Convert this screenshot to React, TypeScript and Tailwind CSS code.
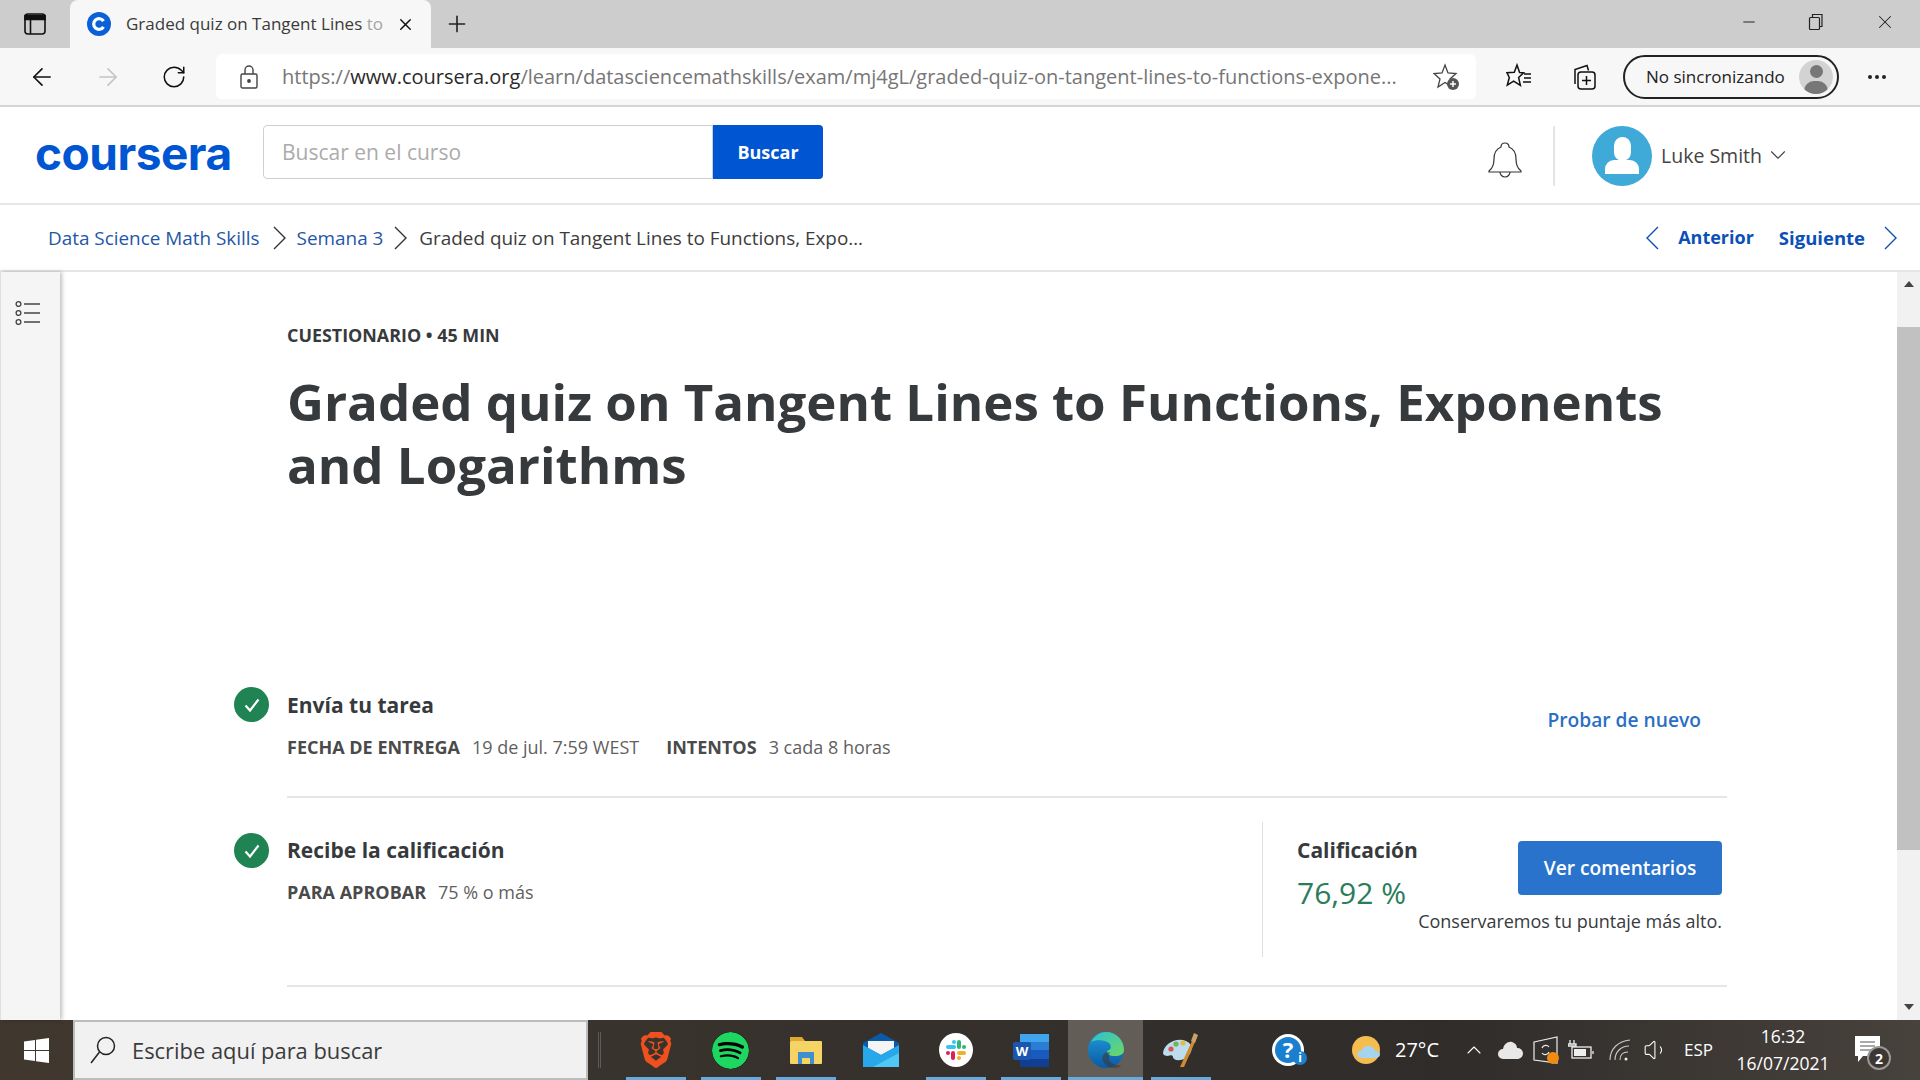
import { ArrowLeft, ArrowRight, ChevronDown, ChevronUp, Minus, Plus, RotateCw, Volume1, X } from 'lucide-react'
import { SiBrave, SiSpotify } from 'react-icons/si'

const OPEN = "font-['Open_Sans',sans-serif]"

function TabFavicon() {
  return (
    <svg width="24" height="24" viewBox="0 0 24 24">
      <circle cx="12" cy="12" r="12" fill="#0b5fd8" />
      <path d="M16.5 9.2a5.3 5.3 0 1 0 0 5.6" fill="none" stroke="#fff" strokeWidth="3.2" />
    </svg>
  )
}

function TabStrip() {
  return (
    <div className="flex h-[48px] bg-[#cdcdcd]">
      <div className="flex w-[70px] items-center justify-center">
        <svg width="22" height="22" viewBox="0 0 22 22" fill="none" stroke="#111" strokeWidth="1.6">
          <rect x="1" y="1" width="20" height="20" rx="3" />
          <path d="M1 2.5h20v4H1z" fill="#111" />
          <path d="M6.5 6v15" />
        </svg>
      </div>
      <div className="flex w-[361px] items-center rounded-t-lg bg-[#f7f7f7] pl-[17px]">
        <TabFavicon />
        <span className="ml-[15px] w-[258px] whitespace-nowrap text-[17px] text-[#3b3b3b]">
          Graded quiz on Tangent Lines <span className="text-[#a5a5a5]">to</span>
        </span>
        <X size={19} strokeWidth={1.8} className="ml-[12px] text-[#111]" />
      </div>
      <div className="flex w-[51px] items-center justify-center">
        <Plus size={26} strokeWidth={1.5} className="text-[#222]" />
      </div>
      <div className="flex-1" />
      <div className="flex items-center gap-[49px] pr-[24px] pb-[4px]">
        <Minus size={18} strokeWidth={1.3} className="text-[#222]" />
        <svg width="18" height="18" viewBox="0 0 18 18" fill="none" stroke="#222" strokeWidth="1.2">
          <rect x="2.5" y="4.5" width="10" height="12" rx="1" />
          <path d="M5.5 4.5V1.5h9.5v12h-2.5" />
        </svg>
        <X size={22} strokeWidth={1.1} className="text-[#222]" />
      </div>
    </div>
  )
}

function BrowserToolbar() {
  return (
    <div className="flex h-[59px] items-center border-b-2 border-[#d4d4d4] bg-[#f7f7f7]">
      <div className="flex w-[216px] items-center">
        <ArrowLeft size={28} strokeWidth={1.4} className="ml-[28px] text-[#111]" />
        <ArrowRight size={28} strokeWidth={1.4} className="ml-[38px] text-[#c4c4c4]" />
        <RotateCw size={26} strokeWidth={1.4} className="ml-[39px] text-[#111]" />
      </div>
      <div className="flex h-[45px] w-[1260px] items-center rounded-md bg-white pl-[24px]">
        <svg width="18" height="24" viewBox="0 0 18 24" fill="none" stroke="#444" strokeWidth="1.4">
          <rect x="1" y="9" width="16" height="14" rx="1.5" />
          <path d="M5 9V5a4 4 0 0 1 8 0v4" />
          <circle cx="9" cy="16" r="1.2" fill="#444" />
        </svg>
        <div className="ml-[24px] w-[1116px] overflow-hidden whitespace-nowrap text-[20px] text-[#767676]">
          <span>https://</span>
          <span className="text-[#2a2a2a]">www.coursera.org</span>
          <span>/learn/datasciencemathskills/exam/mj4gL/graded-quiz-on-tangent-lines-to-functions-expone...</span>
        </div>
        <svg className="ml-[35px]" width="28" height="28" viewBox="0 0 28 28" fill="none" stroke="#444" strokeWidth="1.3">
          <path d="M12 2l3 8 8 .5-6 5.500 2 8-7-4.500-7 4.500 2-8-6-5.500 8-.5z" />
          <circle cx="20" cy="21" r="6" fill="#555" stroke="none" />
          <path d="M20 18v6M17 21h6" stroke="#fff" strokeWidth="1.5" />
        </svg>
      </div>
      <div className="ml-[23px] flex w-[40px] justify-center">
        <svg width="26" height="28" viewBox="0 0 26 28" fill="none" stroke="#111" strokeWidth="1.5">
          <path d="M11 2l2.600 7.500 4 .3-5 4.700 1.800 8-6.800-4.300-6.300 4 2-7.700-2.300-4.700 7.300-.5z" />
          <path d="M18 11h7M18 15h7M17 19h8" />
        </svg>
      </div>
      <div className="ml-[25px] flex w-[40px] justify-center">
        <svg width="28" height="28" viewBox="0 0 28 28" fill="none" stroke="#111" strokeWidth="1.5">
          <path d="M5 21V6.500l12-4 1.500 5" />
          <rect x="8" y="9" width="17" height="17" rx="3" />
          <path d="M16.500 13v9M12 17.500h9" />
        </svg>
      </div>
      <div className="ml-[19px] flex h-[44px] w-[216px] items-center justify-between rounded-full border-2 border-[#222] pl-[21px] pr-[4px]">
        <span className="text-[17px] text-[#222]">No sincronizando</span>
        <span className="relative flex h-[34px] w-[34px] items-center justify-center overflow-hidden rounded-full bg-[#d3d3d3]">
          <span className="absolute top-[5px] h-[13px] w-[13px] rounded-full bg-[#777]" />
          <span className="absolute top-[21px] h-[20px] w-[24px] rounded-full bg-[#777]" />
        </span>
      </div>
      <div className="ml-[29px] flex gap-[3px]">
        <span className="h-[4px] w-[4px] rounded-full bg-[#222]" />
        <span className="h-[4px] w-[4px] rounded-full bg-[#222]" />
        <span className="h-[4px] w-[4px] rounded-full bg-[#222]" />
      </div>
    </div>
  )
}

function SiteHeader() {
  return (
    <div className="flex h-[98px] items-center border-b-2 border-[#e6e6e6] bg-white pl-[35px]">
      <span className="w-[228px] -translate-y-[2px] font-['Inter',sans-serif] text-[46px] leading-none font-bold tracking-[-0.5px] text-[#0056d2]">
        coursera
      </span>
      <div className="flex h-[54px] w-[560px] -translate-y-[3px]">
        <div className="flex w-[450px] items-center rounded-l border border-[#cfcfcf] pl-[18px] pt-[2px] text-[21px] text-[#ababab]">
          Buscar en el curso
        </div>
        <div className="flex w-[110px] items-center justify-center rounded-r bg-[#0056d2] text-[18px] font-bold text-white">
          Buscar
        </div>
      </div>
      <div className="flex-1" />
      <svg className="mr-[31px] mt-[10px]" width="34" height="37" viewBox="0 0 34 37" fill="none" stroke="#333" strokeWidth="1.2">
        <path d="M17 1c-3 0-4 2-4 4-5 2-7 6-7 12 0 6-1 9-5 12v1h32v-1c-4-3-5-6-5-12 0-6-2-10-7-12 0-2-1-4-4-4z" />
        <path d="M12 30a5 5 0 0 0 10 0" />
      </svg>
      <div className="mt-[2px] h-[60px] w-[2px] bg-[#e4e4e4]" />
      <div className="ml-[37px] mt-[2px] flex h-[60px] w-[60px] items-end justify-center overflow-hidden rounded-full bg-[#3fa9d8]">
        <div className="flex flex-col items-center">
          <span className="h-[24px] w-[17px] rounded-full bg-white" />
          <span className="mb-[12px] -mt-[1px] h-[14px] w-[34px] rounded-t-[9px] bg-white" />
        </div>
      </div>
      <span className="ml-[9px] pt-[1px] text-[19.5px] text-[#444]">Luke Smith</span>
      <ChevronDown size={26} strokeWidth={1} className="ml-[3px] mr-[129px] text-[#444]" />
    </div>
  )
}

function Chevron({ left, className }: { left?: boolean; className: string }) {
  return (
    <svg className={className} width="14" height="24" viewBox="0 0 14 24" fill="none" stroke="currentColor" strokeWidth="1.4">
      <path d={left ? 'M13 1L2 12l11 11' : 'M1 1l11 11L1 23'} />
    </svg>
  )
}

function Breadcrumbs() {
  return (
    <div className="flex h-[67px] items-center border-b-2 border-[#e6e6e6] bg-white pl-[48px] text-[18.9px]">
      <span className="pt-[1px] text-[#1f57a8]">Data Science Math Skills</span>
      <Chevron className="ml-[13px] mr-[10px] text-[#333]" />
      <span className="pt-[1px] text-[#1f57a8]">Semana 3</span>
      <Chevron className="mx-[11px] text-[#333]" />
      <span className="pt-[1px] text-[#3c3c3c]">Graded quiz on Tangent Lines to Functions, Expo…</span>
      <div className="flex-1" />
      <Chevron left className="text-[#0b50b8]" />
      <span className="ml-[19px] text-[18px] font-bold text-[#0b50b8]">Anterior</span>
      <span className="ml-[25px] text-[18.5px] font-bold text-[#0b50b8]">Siguiente</span>
      <Chevron className="ml-[19px] mr-[22px] text-[#0b50b8]" />
    </div>
  )
}

function CheckBadge() {
  return (
    <span className="flex h-[35px] w-[35px] shrink-0 items-center justify-center rounded-full bg-[#1f8354]">
      <svg width="20" height="20" viewBox="0 0 20 20" fill="none" stroke="#fff" strokeWidth="2.2">
        <path d="M3.500 10.500l4.500 5 8.500-11" />
      </svg>
    </span>
  )
}

function Sidebar() {
  return (
    <div className="z-10 w-[60px] shrink-0 border-l border-[#dfdfdf] bg-[#f5f5f5] pl-[14px] pt-[28px] shadow-[2px_0_4px_rgba(0,0,0,0.25)]">
      <svg width="26" height="26" viewBox="0 0 26 26" fill="none" stroke="#444" strokeWidth="1.3">
        <circle cx="3.500" cy="4" r="2.400" />
        <circle cx="3.500" cy="13" r="2.400" />
        <circle cx="3.500" cy="22" r="2.400" />
        <path d="M9 4h16M9 13h16M9 22h16" />
      </svg>
    </div>
  )
}

function QuizContent() {
  return (
    <div className="min-w-0 flex-1 overflow-hidden bg-white pl-[174px] pr-[170px] text-[#373a3c]">
      <div className="ml-[53px] pt-[51px]">
        <p className="text-[17.9px] leading-[24px] font-bold">CUESTIONARIO • 45 MIN</p>
        <h1 className="mt-[23px] text-[51px] leading-[63px] font-bold">
          Graded quiz on Tangent Lines to Functions, Exponents and Logarithms
        </h1>
      </div>
      <div className="mt-[191px] flex h-[109px]">
        <CheckBadge />
        <div className="ml-[18px] flex-1">
          <p className="text-[21px] leading-[36px] font-bold">Envía tu tarea</p>
          <p className="mt-[12px] flex text-[18px] leading-[24px]">
            <b className="text-[#4a4a4a]">FECHA DE ENTREGA</b>
            <span className="ml-[12px] text-[#5f5f5f]">19 de jul. 7:59 WEST</span>
            <b className="ml-[27px] text-[#4a4a4a]">INTENTOS</b>
            <span className="ml-[12px] text-[#5f5f5f]">3 cada 8 horas</span>
          </p>
        </div>
        <span className="mt-[19px] mr-[26px] text-[19.2px] leading-[28px] font-semibold text-[#2a6fc4]">Probar de nuevo</span>
      </div>
      <div className="ml-[53px] h-[2px] bg-[#e6e6e6]" />
      <div className="flex h-[187px] pt-[24px]">
        <div className="pt-[11px]">
          <CheckBadge />
        </div>
        <div className="ml-[18px] w-[975px] pt-[11px]">
          <p className="text-[21px] leading-[35px] font-bold">Recibe la calificación</p>
          <p className="mt-[12px] text-[18px] leading-[24px]">
            <b className="text-[#4a4a4a]">PARA APROBAR</b>
            <span className="ml-[12px] text-[#5f5f5f]">75 % o más</span>
          </p>
        </div>
        <div className="h-[135px] w-[1px] bg-[#e0e0e0]" />
        <div className="flex flex-1 pl-[34px] pt-[11px]">
          <div className="w-[221px]">
            <p className="text-[21px] leading-[35px] font-bold">Calificación</p>
            <p className="mt-[6px] text-[30px] leading-[38px] text-[#2a7d5a]">76,92 %</p>
          </div>
          <div className="flex w-[204px] flex-col items-end">
            <div className="mt-[8px] flex h-[54px] w-[204px] shrink-0 items-center justify-center rounded-sm bg-[#2a73cc] text-[19.2px] font-semibold text-white">
              Ver comentarios
            </div>
            <p className="mt-[13px] whitespace-nowrap text-[18px] leading-[26px]">Conservaremos tu puntaje más alto.</p>
          </div>
        </div>
      </div>
      <div className="ml-[53px] h-[2px] bg-[#e6e6e6]" />
    </div>
  )
}

function Scrollbar() {
  return (
    <div className="flex w-[23px] shrink-0 flex-col bg-[#f1f1f1]">
      <div className="flex h-[23px] items-center justify-center">
        <span className="h-0 w-0 border-x-[5px] border-b-[6px] border-x-transparent border-b-[#444]" />
      </div>
      <div className="mt-[32px] h-[523px] bg-[#c1c1c1]" />
      <div className="flex-1" />
      <div className="flex h-[26px] items-center justify-center">
        <span className="h-0 w-0 border-x-[5px] border-t-[6px] border-x-transparent border-t-[#444]" />
      </div>
    </div>
  )
}

function Tile({ active, running = true, children }: { active?: boolean; running?: boolean; children: React.ReactNode }) {
  return (
    <div className={active ? 'relative flex h-full w-[75px] items-center justify-center bg-[#635d57]' : 'relative flex h-full w-[75px] items-center justify-center'}>
      {children}
      {running && <span className={active ? 'absolute bottom-0 h-[3px] w-full bg-[#6aa9dc]' : 'absolute bottom-0 h-[3px] w-[60px] bg-[#6aa9dc]'} />}
    </div>
  )
}

function FilesIcon() {
  return (
    <svg width="32" height="28" viewBox="0 0 32 28">
      <path d="M0 1h12l3 4H0z" fill="#e0a82e" />
      <rect x="0" y="5" width="32" height="23" rx="1" fill="#f6d365" />
      <rect x="8" y="16" width="16" height="12" fill="#3f8fd0" />
      <rect x="12" y="22" width="8" height="6" fill="#f6d365" />
    </svg>
  )
}

function MailIcon() {
  return (
    <svg width="36" height="34" viewBox="0 0 36 34">
      <path d="M18 0L36 10v24H0V10z" fill="#0a5aa8" />
      <path d="M5 8h26v7L18 22 5 15z" fill="#f4f4f4" />
      <path d="M0 12l18 10 18-10v22H0z" fill="#28a8ea" />
      <path d="M36 34H10l26-14z" fill="#50c8f5" />
    </svg>
  )
}

function SlackIcon() {
  return (
    <svg width="34" height="34" viewBox="0 0 34 34">
      <circle cx="17" cy="17" r="17" fill="#fff" />
      <rect x="7" y="12" width="10" height="4" rx="2" fill="#36c5f0" />
      <rect x="13" y="7" width="4" height="4" rx="2" fill="#36c5f0" />
      <rect x="18" y="7" width="4" height="9" rx="2" fill="#2eb67d" />
      <rect x="23" y="12" width="4" height="4" rx="2" fill="#2eb67d" />
      <rect x="18" y="18" width="9" height="4" rx="2" fill="#ecb22e" />
      <rect x="18" y="23" width="4" height="4" rx="2" fill="#ecb22e" />
      <rect x="12" y="18" width="4" height="9" rx="2" fill="#e01e5a" />
      <rect x="7" y="18" width="4" height="4" rx="2" fill="#e01e5a" />
    </svg>
  )
}

function WordIcon() {
  return (
    <svg width="36" height="33" viewBox="0 0 36 33">
      <rect x="7" y="0" width="29" height="33" rx="2" fill="#2b7cd3" />
      <rect x="7" y="0" width="29" height="8" fill="#41a5ee" />
      <rect x="7" y="16" width="29" height="9" fill="#185abd" />
      <rect x="7" y="25" width="29" height="8" fill="#103f91" />
      <rect x="0" y="8" width="18" height="18" rx="2" fill="#1a56b0" />
      <text x="9" y="22" textAnchor="middle" fontFamily="Open Sans" fontWeight="700" fontSize="13" fill="#fff">W</text>
    </svg>
  )
}

function EdgeIcon() {
  return (
    <svg width="36" height="36" viewBox="0 0 36 36">
      <defs>
        <linearGradient id="edgeBlue" x1="0" y1="0" x2="0" y2="1">
          <stop offset="0" stopColor="#1f9bd8" />
          <stop offset="1" stopColor="#0c59a4" />
        </linearGradient>
        <linearGradient id="edgeGreen" x1="0" y1="0" x2="1" y2="1">
          <stop offset="0" stopColor="#2cc0d8" />
          <stop offset="1" stopColor="#6fd860" />
        </linearGradient>
      </defs>
      <circle cx="18" cy="18" r="18" fill="url(#edgeBlue)" />
      <path d="M3 10C7 3 13 0 18 0c10 0 18 8 18 18 0 4-4 6-9 6-6 0-8-2-8-5 3-1 5-3 3-7-3-4-14-5-19-2z" fill="url(#edgeGreen)" />
      <path d="M22 20c-5 0-9 3-7 9 1 3 5 7 12 7 3 0 5-1 6-3-6 1-12-2-12-7 0-2 0-4 1-6z" fill="#3d3630" opacity="0.55" />
    </svg>
  )
}

function PaletteIcon() {
  return (
    <svg width="36" height="34" viewBox="0 0 36 34">
      <path d="M0 20C1 11 13 4 23 8c8 3 7 12 0 17-7 4-13 2-13-1 0-2-3-2-5-1-3 0-5-1-5-3z" fill="#bcdcf0" />
      <circle cx="8" cy="16" r="2.600" fill="#d9534f" />
      <circle cx="13" cy="11" r="2.600" fill="#6fb552" />
      <circle cx="20" cy="10" r="2.600" fill="#e7b93d" />
      <path d="M17 34l12-26 3 1-11 25z" fill="#d28a2f" />
      <path d="M28 8l3-8 4 2-3 8z" fill="#c9a36a" />
    </svg>
  )
}

function HelpIcon() {
  return (
    <svg width="36" height="32" viewBox="0 0 36 32">
      <circle cx="16" cy="16" r="16" fill="#fff" />
      <circle cx="16" cy="16" r="13" fill="#1b7fd0" />
      <text x="16" y="24" textAnchor="middle" fontFamily="Open Sans" fontWeight="700" fontSize="22" fill="#fff">?</text>
      <circle cx="28" cy="24" r="7" fill="#1b7fd0" />
      <text x="28" y="28" textAnchor="middle" fontFamily="Open Sans" fontWeight="700" fontSize="12" fill="#fff">i</text>
    </svg>
  )
}

function WeatherIcon() {
  return (
    <svg width="30" height="28" viewBox="0 0 30 28">
      <circle cx="14" cy="14" r="14" fill="#f5bd4f" />
      <path d="M10 22c-3 0-5-1.500-5-3.500S7 15 9 15c1-3 4-5 7-5 4 0 7 2.500 7 5 3 0 5 1.500 5 3.500s-2 3.500-5 3.500z" fill="#a5d4ee" />
    </svg>
  )
}

function Tray() {
  return (
    <div className="flex h-full items-center text-white">
      <span className="ml-[41px] flex w-[62px] justify-center"><HelpIcon /></span>
      <span className="ml-[31px]"><WeatherIcon /></span>
      <span className="ml-[13px] w-[52px] text-[20px]">27°C</span>
      <ChevronUp size={24} strokeWidth={1.1} className="ml-[15px]" />
      <svg className="ml-[12px]" width="26" height="18" viewBox="0 0 26 18">
        <path d="M5 18a5 5 0 0 1 0-10c1-5 5-8 9-7 3 1 5 3 5 6a5.500 5.500 0 0 1 1 11z" fill="#e8e8e8" />
      </svg>
      <svg className="ml-[9px]" width="26" height="28" viewBox="0 0 26 28" fill="none" stroke="#eee" strokeWidth="1.2">
        <path d="M1 6l23-5v26l-23-3zM9 12a4 4 0 0 1 7-1M16 16a4 4 0 0 1-7 1" />
        <circle cx="20" cy="22" r="6" fill="#f28c10" stroke="none" />
      </svg>
      <svg className="ml-[9px]" width="26" height="22" viewBox="0 0 26 22" fill="none" stroke="#eee" strokeWidth="1.3">
        <rect x="4" y="8" width="19" height="11" />
        <rect x="6" y="10" width="12" height="7" fill="#eee" stroke="none" />
        <path d="M25 12v3M2 1v4M6 1v4M0 5h8v2H0z" />
      </svg>
      <svg className="ml-[15px]" width="22" height="22" viewBox="0 0 22 22" fill="none" stroke="#ccc" strokeWidth="1.1">
        <path d="M1 21C1 10 9 2 21 1M6 21c0-8 6-14 14-14M11 21c0-5 3-8 8-8" />
        <circle cx="17" cy="20" r="1.500" fill="#eee" stroke="none" />
      </svg>
      <Volume1 size={26} strokeWidth={1} className="ml-[12px]" />
      <span className="ml-[15px] text-[17px]">ESP</span>
      <div className="ml-[24px] flex w-[92px] flex-col items-center text-[17.500px] leading-[27px]">
        <span>16:32</span>
        <span>16/07/2021</span>
      </div>
      <div className="relative ml-[26px]">
        <svg width="26" height="28" viewBox="0 0 26 28">
          <path d="M0 0h25v20H8l-5 6v-6H0z" fill="#fff" />
          <path d="M5 6h15M5 10h15M5 14h15" stroke="#555" strokeWidth="1.2" />
        </svg>
        <span className="absolute -right-[10px] top-[10px] flex h-[24px] w-[24px] items-center justify-center rounded-full border-2 border-[#999] bg-[#3d3733] text-[14px] font-bold">2</span>
      </div>
    </div>
  )
}

function Taskbar() {
  return (
    <div className="flex h-[60px] shrink-0 items-center bg-linear-to-r from-[#40382f] via-[#2f2c2a] via-75% to-[#48423c]">
      <div className="flex w-[73px] justify-center">
        <svg width="25" height="25" viewBox="0 0 25 25" fill="#fff">
          <path d="M0 3.500l11-1.500v10H0zM12 1.800L25 0v12H12zM0 13h11v10L0 21.500zM12 13h13v12l-13-1.800z" />
        </svg>
      </div>
      <div className="flex h-full w-[515px] items-center border-2 border-[#bcbcbc] bg-[#f1f1f1] pl-[15px]">
        <svg width="26" height="28" viewBox="0 0 26 28" fill="none" stroke="#222" strokeWidth="1.5">
          <ellipse cx="16" cy="10" rx="8.500" ry="8.500" />
          <path d="M9.500 16L1 27" />
        </svg>
        <span className="ml-[16px] pt-[2px] text-[21.9px] text-[#3b3b3b]">Escribe aquí para buscar</span>
      </div>
      <div className="flex h-full w-[30px] items-center pl-[10px]">
        <span className="h-[36px] w-[3px] border-x border-[#5f5a55]" />
      </div>
      <Tile><SiBrave size={36} className="text-[#f0501e]" /></Tile>
      <Tile><SiSpotify size={37} className="rounded-full bg-black text-[#1ed760]" /></Tile>
      <Tile><FilesIcon /></Tile>
      <Tile running={false}><MailIcon /></Tile>
      <Tile><SlackIcon /></Tile>
      <Tile><WordIcon /></Tile>
      <Tile active><EdgeIcon /></Tile>
      <Tile><PaletteIcon /></Tile>
      <Tray />
    </div>
  )
}

export default function App() {
  return (
    <div className={`flex h-screen w-full flex-col overflow-hidden ${OPEN}`}>
      <TabStrip />
      <BrowserToolbar />
      <SiteHeader />
      <Breadcrumbs />
      <div className="flex min-h-0 flex-1">
        <Sidebar />
        <QuizContent />
        <Scrollbar />
      </div>
      <Taskbar />
    </div>
  )
}
